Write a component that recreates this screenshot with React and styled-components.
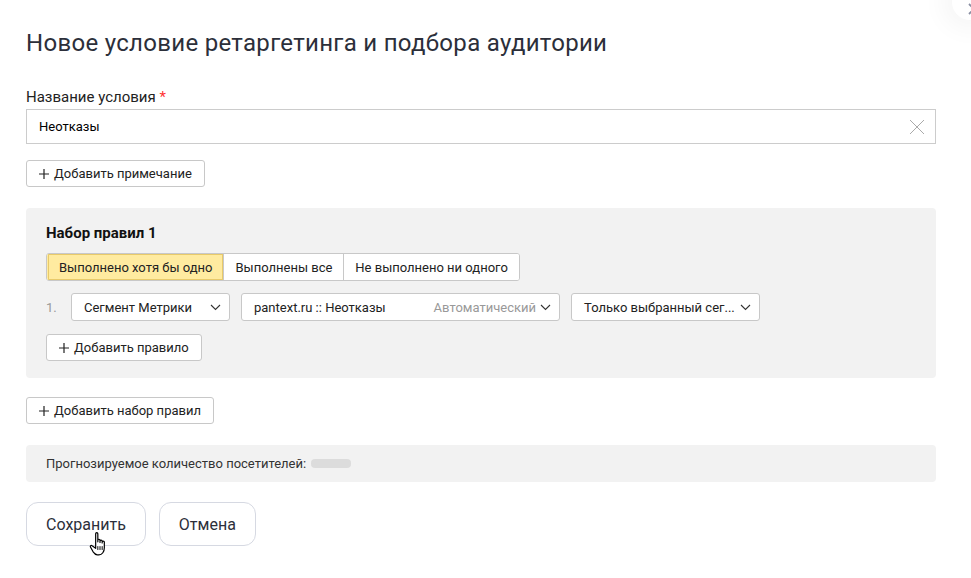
import React from "react";
import styled, { createGlobalStyle } from "styled-components";

const Global = createGlobalStyle`
  html, body {
    margin: 0;
    padding: 0;
    background: #fff;
    font-family: Roboto, "Liberation Sans", Arial, sans-serif;
    color: #000;
  }
`;

const Page = styled.div`
  position: relative;
  width: 971px;
  height: 578px;
  overflow: hidden;
  background: #fff;
`;

const Content = styled.div`
  padding: 28px 35px 0 26px;
  display: flex;
  flex-direction: column;
`;

const Title = styled.h1`
  margin: 0;
  font-size: 24px;
  font-weight: 400;
  line-height: 30px;
  color: #2c2f3a;
  letter-spacing: 0.3px;
`;

const Label = styled.div`
  margin-top: 30px;
  font-size: 15px;
  line-height: 18px;
  color: #222;
  span {
    color: #f33;
  }
`;

const InputBox = styled.div`
  margin-top: 3px;
  height: 35px;
  box-sizing: border-box;
  border: 1px solid #ccc;
  display: flex;
  align-items: center;
  padding: 0 10px 0 12px;
  font-size: 13px;
  color: #000;
`;

const InputText = styled.div`
  flex: 1;
`;

const Button = styled.button`
  align-self: flex-start;
  height: 27px;
  box-sizing: border-box;
  border: 1px solid #c8c8c8;
  border-radius: 3px;
  background: #fff;
  padding: 0 12px;
  font-family: inherit;
  font-size: 13px;
  color: #222;
  display: inline-flex;
  align-items: center;
  gap: 5px;
  margin-top: ${(p) => p.$mt || 0}px;
`;

const Panel = styled.div`
  margin-top: 21px;
  background: #f2f2f2;
  border-radius: 4px;
  padding: 16px 20px 17px 20px;
  display: flex;
  flex-direction: column;
`;

const PanelTitle = styled.div`
  font-size: 15px;
  font-weight: 700;
  line-height: 18px;
  color: #111;
`;

const Segments = styled.div`
  margin-top: 11px;
  display: flex;
  align-self: flex-start;
  border: 1px solid #c8c8c8;
  border-radius: 3px;
  overflow: hidden;
  background: #fff;
`;

const Segment = styled.div`
  height: 26px;
  display: flex;
  align-items: center;
  padding: 0 11px;
  font-size: 13px;
  color: #222;
  background: ${(p) => (p.$active ? "#ffeba0" : "#fff")};
  border-left: 1px solid ${(p) => (p.$first ? "transparent" : "#c8c8c8")};
  ${(p) => p.$active && "box-shadow: inset 0 0 0 1px #e8ca6a;"}
`;

const RuleRow = styled.div`
  margin-top: 12px;
  display: flex;
  align-items: center;
  gap: 11px;
`;

const Num = styled.div`
  width: 14px;
  font-size: 13px;
  color: #999;
`;

const Select = styled.div`
  width: ${(p) => p.$w}px;
  height: 28px;
  box-sizing: border-box;
  border: 1px solid #c8c8c8;
  border-radius: 3px;
  background: #fff;
  display: flex;
  align-items: center;
  padding: 0 8px 0 12px;
  font-size: 13px;
  color: #222;
  gap: 4px;
`;

const SelectText = styled.div`
  flex: 1;
  min-width: 0;
  white-space: nowrap;
`;

const Hint = styled.span`
  flex-shrink: 0;
  color: #999;
  white-space: nowrap;
`;

const Forecast = styled.div`
  margin-top: 21px;
  height: 37px;
  background: #f2f2f2;
  border-radius: 4px;
  display: flex;
  align-items: center;
  padding: 0 20px;
  font-size: 13px;
  color: #333;
  gap: 5px;
`;

const Skeleton = styled.div`
  width: 40px;
  height: 9px;
  border-radius: 4px;
  background: #dcdcdc;
`;

const Actions = styled.div`
  margin-top: 20px;
  display: flex;
  gap: 13px;
  position: relative;
`;

const ActionButton = styled.button`
  height: 44px;
  box-sizing: border-box;
  border: 1px solid #d6d9e2;
  border-radius: 12px;
  background: #fff;
  padding: 0 19px;
  font-family: inherit;
  font-size: 16px;
  color: #2c2f3a;
`;

const Cursor = styled.svg`
  position: absolute;
  left: 63px;
  top: 29px;
`;

const CloseCircle = styled.div`
  position: absolute;
  left: 952px;
  top: -16px;
  width: 36px;
  height: 36px;
  border-radius: 50%;
  background: #fff;
  box-shadow: 0 0 24px 10px rgba(0, 0, 0, 0.04);
  display: flex;
  align-items: center;
  justify-content: center;
`;

const Chevron = () => (
  <svg width="11" height="7" viewBox="0 0 11 7">
    <path d="M1 1 L5.5 5.5 L10 1" fill="none" stroke="#333" strokeWidth="1.1" />
  </svg>
);

const Plus = () => (
  <svg width="10" height="10" viewBox="0 0 10 10">
    <path d="M5 0 V10 M0 5 H10" stroke="#222" strokeWidth="1.2" />
  </svg>
);

export default function App() {
  return (
    <Page>
      <Global />
      <CloseCircle>
        <svg width="12" height="12" viewBox="0 0 12 12" style={{ marginLeft: 8, marginTop: 14 }}>
          <path d="M1 1 L11 11 M11 1 L1 11" stroke="#8a8fa3" strokeWidth="1.8" />
        </svg>
      </CloseCircle>
      <Content>
        <Title>Новое условие ретаргетинга и подбора аудитории</Title>
        <Label>
          Название условия <span>*</span>
        </Label>
        <InputBox>
          <InputText>Неотказы</InputText>
          <svg width="16" height="16" viewBox="0 0 16 16">
            <path d="M1 1 L15 15 M15 1 L1 15" stroke="#aaa" strokeWidth="1" />
          </svg>
        </InputBox>
        <Button $mt={16}>
          <Plus />
          Добавить примечание
        </Button>
        <Panel>
          <PanelTitle>Набор правил 1</PanelTitle>
          <Segments>
            <Segment $active $first>Выполнено хотя бы одно</Segment>
            <Segment>Выполнены все</Segment>
            <Segment>Не выполнено ни одного</Segment>
          </Segments>
          <RuleRow>
            <Num>1.</Num>
            <Select $w={159}>
              <SelectText>Сегмент Метрики</SelectText>
              <Chevron />
            </Select>
            <Select $w={319}>
              <SelectText>pantext.ru :: Неотказы</SelectText>
              <Hint>Автоматический</Hint>
              <Chevron />
            </Select>
            <Select $w={189}>
              <SelectText>Только выбранный сег...</SelectText>
              <Chevron />
            </Select>
          </RuleRow>
          <Button $mt={13}>
            <Plus />
            Добавить правило
          </Button>
        </Panel>
        <Button $mt={19}>
          <Plus />
          Добавить набор правил
        </Button>
        <Forecast>
          Прогнозируемое количество посетителей:
          <Skeleton />
        </Forecast>
        <Actions>
          <ActionButton>Сохранить</ActionButton>
          <ActionButton>Отмена</ActionButton>
          <Cursor width="22" height="26" viewBox="0 0 20 24">
            <path
              d="M6 2.5 C6 1.2 8 1.2 8 2.5 V10 V8.5 C8 7.3 10 7.3 10 8.5 V10.5 V9.3 C10 8.1 12 8.1 12 9.3 V11 V10.2 C12 9 14 9 14 10.2 V15.5 C14 19 12 22 9 22 H7.5 C5.5 22 4.5 20.5 3.5 19 L1.2 14.8 C0.6 13.8 1.8 12.8 2.7 13.6 L6 16 Z"
              fill="#fff"
              stroke="#000"
              strokeWidth="1.1"
              strokeLinejoin="round"
            />
            <path d="M8 14 V17.5 M10 14 V17.5 M12 14 V17.5" stroke="#000" strokeWidth="0.9" />
          </Cursor>
        </Actions>
      </Content>
    </Page>
  );
}
